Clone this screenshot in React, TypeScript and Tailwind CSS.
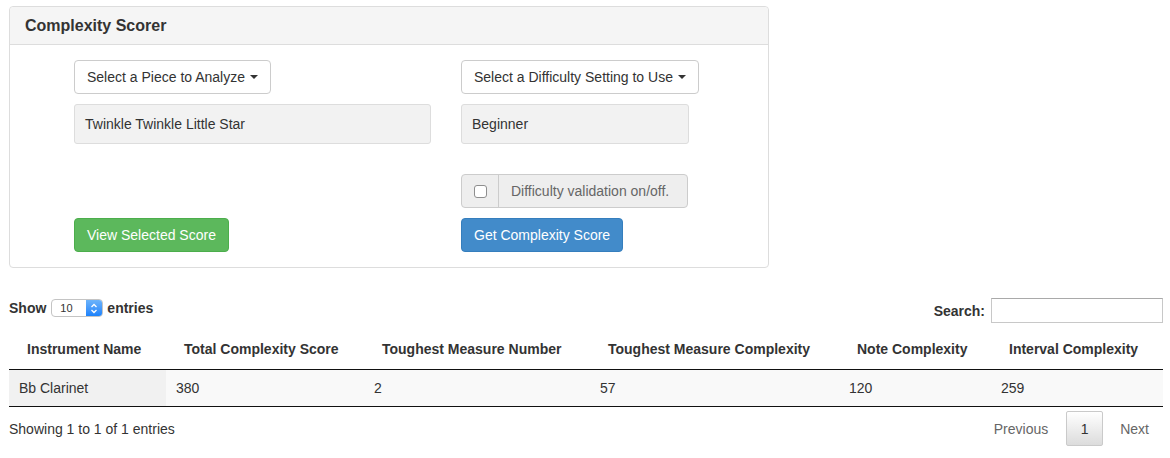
import React from "react";

const Caret = () => (
  <span className="ml-[5px] inline-block w-0 h-0 border-t-[4px] border-t-[#333] border-x-[4px] border-x-transparent align-middle" />
);

export default function App() {
  const font = { fontFamily: '"Liberation Sans", Arial, sans-serif' };
  const cols = [
    { h: "Instrument Name", v: "Bb Clarinet", w: "w-[157px]" },
    { h: "Total Complexity Score", v: "380", w: "w-[198px]" },
    { h: "Toughest Measure Number", v: "2", w: "w-[226px]" },
    { h: "Toughest Measure Complexity", v: "57", w: "w-[249px]" },
    { h: "Note Complexity", v: "120", w: "w-[152px]" },
    { h: "Interval Complexity", v: "259", w: "w-[172px]" },
  ];
  return (
    <div style={font} className="w-[1170px] h-[458px] bg-white text-[#333] text-[14px] leading-[20px] overflow-hidden">
      {/* Panel */}
      <div className="ml-[9px] mt-[6px] w-[760px] border border-[#dddddd] rounded-[4px]">
        <div className="h-[38px] bg-[#f5f5f5] border-b border-[#dddddd] rounded-t-[4px] px-[15px] flex items-center">
          <h3 className="text-[16px] leading-[18px] font-bold text-[#333]">Complexity Scorer</h3>
        </div>
        <div className="flex pt-[15px] pb-[15px]">
          <div className="ml-[64px] w-[387px] flex flex-col items-start">
            <button className="h-[34px] px-[12px] border border-[#cccccc] rounded-[4px] bg-white text-[#333] flex items-center">
              Select a Piece to Analyze<Caret />
            </button>
            <div className="mt-[10px] w-[357px] h-[40px] bg-[#f2f2f2] border border-[#dddddd] rounded-[3px] px-[10px] flex items-center">
              Twinkle Twinkle Little Star
            </div>
            <button className="mt-[74px] h-[34px] px-[12px] border border-[#4cae4c] rounded-[4px] bg-[#5cb85c] text-white flex items-center">
              View Selected Score
            </button>
          </div>
          <div className="flex flex-col items-start">
            <button className="h-[34px] px-[12px] border border-[#cccccc] rounded-[4px] bg-white text-[#333] flex items-center">
              Select a Difficulty Setting to Use<Caret />
            </button>
            <div className="mt-[10px] w-[228px] h-[40px] bg-[#f2f2f2] border border-[#dddddd] rounded-[3px] px-[10px] flex items-center">
              Beginner
            </div>
            <div className="mt-[30px] w-[227px] h-[34px] flex border border-[#cccccc] rounded-[4px] bg-[#eeeeee]">
              <div className="w-[37px] border-r border-[#cccccc] flex items-center justify-center">
                <span className="w-[13px] h-[13px] border border-[#8e8e8e] rounded-[3px] bg-white" />
              </div>
              <div className="flex-1 flex items-center pl-[12px] text-[#666]">Difficulty validation on/off.</div>
            </div>
            <button className="mt-[10px] h-[34px] px-[12px] border border-[#357ebd] rounded-[4px] bg-[#428bca] text-white flex items-center">
              Get Complexity Score
            </button>
          </div>
        </div>
      </div>

      {/* Table section */}
      <div className="ml-[9px] w-[1154px]">
        <div className="mt-[30px] h-[25px] flex items-start justify-between">
          <div className="h-[20px] flex items-center font-bold">
            <span>Show</span>
            <div className="ml-[5px] mr-[4px] w-[52px] h-[18px] border border-[#c4c4c4] rounded-[4px] bg-white flex overflow-hidden">
              <span className="flex-1 pl-[8px] text-[11px] leading-[16px] font-normal">10</span>
              <span className="w-[16px] h-full bg-gradient-to-b from-[#6cb3fa] to-[#1a82fb] flex items-center justify-center">
                <svg width="8" height="11" viewBox="0 0 8 11" fill="none" stroke="white" strokeWidth="1.3">
                  <path d="M1.5 4 L4 1.5 L6.5 4" />
                  <path d="M1.5 7 L4 9.5 L6.5 7" />
                </svg>
              </span>
            </div>
            <span>entries</span>
          </div>
          <div className="flex items-center font-bold">
            <span>Search:</span>
            <div className="ml-[6px] w-[172px] h-[25px] border border-[#c8c8c8] border-t-[#a9a9a9] bg-white" />
          </div>
        </div>
        <div className="mt-[6px]">
          <div className="flex border-b border-[#111] font-bold">
            {cols.map((c) => (
              <div key={c.h} className={`${c.w} pl-[18px] py-[10px] whitespace-nowrap`}>{c.h}</div>
            ))}
          </div>
          <div className="flex border-b border-[#111] bg-[#f9f9f9]">
            {cols.map((c, i) => (
              <div key={c.h} className={`${c.w} px-[10px] py-[8px] ${i === 0 ? "bg-[#f1f1f1]" : ""}`}>{c.v}</div>
            ))}
          </div>
        </div>
        <div className="mt-[4px] flex items-center justify-between">
          <span>Showing 1 to 1 of 1 entries</span>
          <div className="flex items-center">
            <span className="pl-[14px] pr-[18px] h-[35px] flex items-center text-[#666]">Previous</span>
            <span className="w-[37px] h-[35px] flex items-center justify-center border border-[#cacaca] rounded-[2px] bg-gradient-to-b from-white to-[#dcdcdc] text-[#333]">1</span>
            <span className="ml-[3px] px-[14px] h-[35px] flex items-center text-[#666]">Next</span>
          </div>
        </div>
      </div>
    </div>
  );
}
